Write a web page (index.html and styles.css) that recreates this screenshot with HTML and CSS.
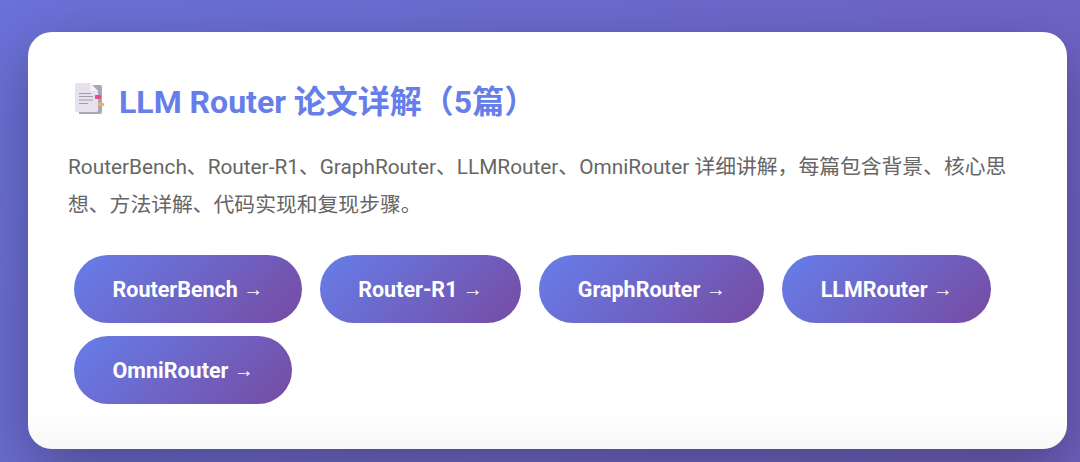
FILE: index.html
```html
<!DOCTYPE html>
<html lang="zh">
<head>
<meta charset="utf-8">
<title>LLM Router 论文详解</title>
<link rel="stylesheet" href="styles.css">
</head>
<body>
<main class="card">
  <h2 class="title">
    <svg class="doc" viewBox="0 0 30 32" aria-hidden="true">
      <path d="M4 2h21a2 2 0 0 1 2 2v25a2 2 0 0 1-2 2H4z" fill="#aaa6b5"/>
      <path d="M1.500 0h13.500l8 8v19.500a1.500 1.500 0 0 1-1.500 1.500H1.500A1.500 1.500 0 0 1 0 27.500V1.500A1.500 1.500 0 0 1 1.500 0z" fill="#e6e0ef"/>
      <path d="M15 0l8 8h-8z" fill="#f3f0f7"/>
      <path d="M4 10.500h12M4 13.500h14M4 17h14M4 20.500h9" stroke="#a09ca9" stroke-width="1.100" fill="none"/>
      <rect x="20" y="12" width="6" height="4" rx=".8" fill="#e0517f"/>
      <rect x="23" y="20" width="6" height="3" rx=".6" fill="#eeb93f"/>
    </svg>
    <span>LLM Router 论文详解（5篇）</span>
  </h2>
  <p class="desc">RouterBench、Router-R1、GraphRouter、LLMRouter、OmniRouter 详细讲解，每篇包含背景、核心思想、方法详解、代码实现和复现步骤。</p>
  <nav class="links">
    <a class="btn" href="#">RouterBench <span class="arrow">→</span></a>
    <a class="btn" href="#">Router-R1 <span class="arrow">→</span></a>
    <a class="btn" href="#">GraphRouter <span class="arrow">→</span></a>
    <a class="btn" href="#">LLMRouter <span class="arrow">→</span></a>
    <a class="btn" href="#">OmniRouter <span class="arrow">→</span></a>
  </nav>
</main>
</body>
</html>
```
FILE: styles.css
```css
* { box-sizing: border-box; }
html, body { height: 100%; }
body {
  margin: 0;
  padding: 32px 13px 13px 28px;
  overflow: hidden;
  background: linear-gradient(135deg, #667eea 0%, #764ba2 100%) 0 -1080px / 100% 3240px no-repeat;
  font-family: Roboto, "Noto Sans CJK SC", sans-serif;
}
.card {
  height: 417px;
  padding: 46px 40px 0;
  border-radius: 24px;
  background: linear-gradient(180deg, #fff 90%, #f8f8f8 100%);
  box-shadow: 0 20px 60px rgba(0, 0, 0, .3);
}
.title {
  display: flex;
  align-items: center;
  gap: 15px;
  height: 42px;
  margin: 0 0 0 7px;
  color: #667eea;
  font-size: 32px;
  font-weight: 700;
}
.doc { width: 30px; height: 32px; flex: none; margin-right: -1px; }
.desc {
  margin: 29px 0 0;
  color: #666;
  font-size: 20.800px;
  line-height: 37.600px;
}
.links {
  display: flex;
  flex-wrap: wrap;
  gap: 13px 18px;
  margin: 31px 0 0;
  padding-left: 6px;
}
.btn {
  display: block;
  height: 68px;
  padding: 0 38.500px;
  border-radius: 34px;
  background: linear-gradient(135deg, #667eea 0%, #764ba2 100%);
  color: #fff;
  font-size: 21.500px;
  font-weight: 700;
  line-height: 68px;
  text-decoration: none;
}
.arrow {
  font-family: "Liberation Sans", sans-serif;
  font-size: 20px;
  font-weight: 700;
  vertical-align: 1px;
}
```
